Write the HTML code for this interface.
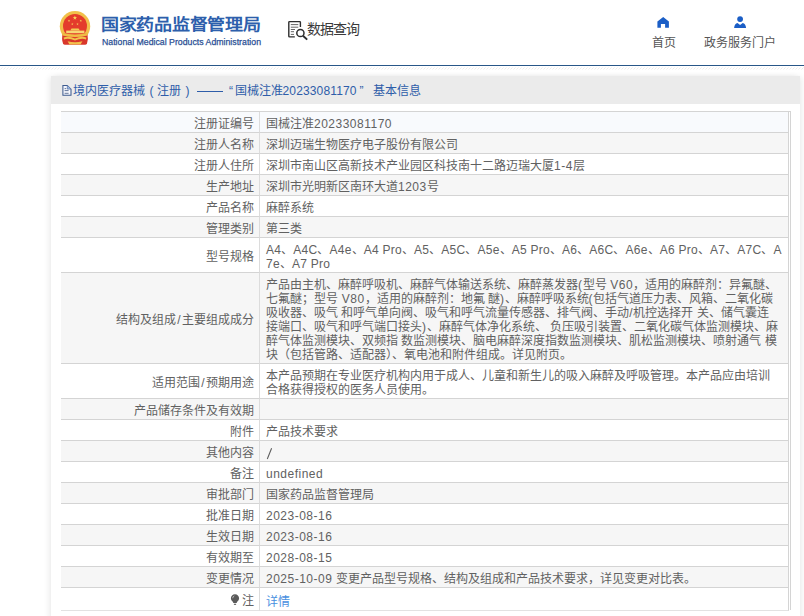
<!DOCTYPE html>
<html lang="zh-CN">
<head>
<meta charset="utf-8">
<style>
*{margin:0;padding:0;box-sizing:border-box}
html,body{width:804px;height:616px;overflow:hidden;background:#fff;font-family:"Liberation Sans",sans-serif;}
.hdr{position:absolute;left:0;top:0;width:804px;height:65px;background:#fff}
.line{position:absolute;left:0;top:65px;width:804px;height:1px;background:#285788}
.hatch{position:absolute;left:0;top:67px;width:804px;height:3px}
.emblem{position:absolute;left:58px;top:9px;width:34px;height:37px}
.t1{position:absolute;left:101px;top:11px;font-size:18px;font-weight:900;color:#2d5fac;white-space:nowrap;letter-spacing:-0.3px;transform-origin:0 5px;transform:scaleY(0.9)}
.t2{position:absolute;left:102px;top:37px;font-size:9px;color:#2a4f94;-webkit-text-stroke:0.25px #2a4f94;white-space:nowrap;transform-origin:0 0;transform:scaleX(0.972)}
.sq{position:absolute;left:287px;top:20px;width:22px;height:21px}
.sqt{position:absolute;left:307px;top:18px;font-size:14px;color:#3a3a3a;white-space:nowrap;letter-spacing:-1px}
.nav{position:absolute;top:33px;font-size:12px;color:#555;white-space:nowrap}
.ico{position:absolute}
.panel{position:absolute;left:51px;top:76px;width:749px;height:545px;background:#fff;box-shadow:-3px 0 6px -1px rgba(0,0,0,0.08),3px 0 6px -1px rgba(0,0,0,0.08)}
.ptitle{position:absolute;left:0;top:0;width:749px;height:28px;background:#ebebeb}
.pdoc{position:absolute;left:11px;top:8px;width:10px;height:12px}
.pt{position:absolute;top:8px;font-size:12px;line-height:14px;color:#2e5da9;white-space:nowrap}
.pdash{position:absolute;left:145.6px;top:15px;width:26px;height:1px;background:#2e5da9}
table{position:absolute;left:10px;top:35px;width:728px;table-layout:fixed;border-collapse:separate;border-spacing:0;font-size:12px;color:#616161;border-top:1px solid #d4d4d4}
.rline{position:absolute;left:739px;top:35px;width:1px;height:499px;background:#d4d4d4}
.tline{position:absolute;left:10px;top:35px;width:730px;height:1px;background:#d4d4d4}
td{border-bottom:1px solid #d4d4d4;border-right:1px solid #d4d4d4;padding:4.5px 6px 1.5px 6px;line-height:14px;vertical-align:middle;white-space:nowrap}
td.l{text-align:right;padding-right:5px;border-right:1px solid #dcdcdc}
tr:nth-child(odd) td{background:#fff}
tr:nth-child(even) td{background:#f6f6f6}
tr:nth-child(1) td{background:#f8fafd}
.e{letter-spacing:0.5px}
.sl{margin:0 1.5px}
.e2{letter-spacing:0.28px}
a{color:#4a90e0;text-decoration:none}
</style>
</head>
<body>
<div class="hdr">
  <svg class="ico" style="left:0;top:0" width="804" height="65" viewBox="0 0 804 65">
    <!-- emblem -->
    <circle cx="75" cy="26.3" r="15.2" fill="#f1c04a"/>
    <path d="M62.6 33.5 Q61.4 39.5 63 43.6 Q63.6 44.8 65 44.8 L85 44.8 Q86.4 44.8 87 43.6 Q88.6 39.5 87.4 33.5 Z" fill="#d9372b"/>
    <circle cx="75" cy="26" r="12" fill="#e43c2c"/>
    <g fill="#f7d45c"><polygon points="74.90,15.50 75.42,17.09 77.09,17.09 75.74,18.07 76.25,19.66 74.90,18.68 73.55,19.66 74.06,18.07 72.71,17.09 74.38,17.09"/><polygon points="69.00,19.40 69.29,20.30 70.24,20.30 69.47,20.85 69.76,21.75 69.00,21.20 68.24,21.75 68.53,20.85 67.76,20.30 68.71,20.30"/><polygon points="80.80,19.40 81.09,20.30 82.04,20.30 81.27,20.85 81.56,21.75 80.80,21.20 80.04,21.75 80.33,20.85 79.56,20.30 80.51,20.30"/><polygon points="72.30,22.80 72.59,23.70 73.54,23.70 72.77,24.25 73.06,25.15 72.30,24.60 71.54,25.15 71.83,24.25 71.06,23.70 72.01,23.70"/><polygon points="77.50,22.80 77.79,23.70 78.74,23.70 77.97,24.25 78.26,25.15 77.50,24.60 76.74,25.15 77.03,24.25 76.26,23.70 77.21,23.70"/></g>
    <path d="M70.3 30.6 L71.5 28.6 H78.6 L79.8 30.6 Z" fill="#f3cb55"/>
    <rect x="66.2" y="30.6" width="18.2" height="2.6" fill="#f6d775"/>
    <path d="M61.8 32.8 Q75 36.2 88.2 32.8 L87.6 35.6 Q75 38.6 62.4 35.6 Z" fill="#efbd45"/>
    <path d="M63.6 37.4 Q69 35.6 75 38.4 Q81 35.6 86.4 37.4 L86 39.4 Q81 37.8 75 40.6 Q69 37.8 64 39.4 Z" fill="#f2c24c"/>
    <path d="M67.6 41.2 L69.4 44.6 H80.6 L82.4 41.2 Q75 43.4 67.6 41.2 Z" fill="#f2c24c"/>
    <!-- query icon -->
    <g fill="none" stroke="#2e2e2e" stroke-width="1.4">
      <path d="M294.8 36.9 L289.5 36.9 Q288.8 36.9 288.8 36.2 L288.8 22.3 Q288.8 21.6 289.5 21.6 L299.7 21.6 Q300.4 21.6 300.4 22.3 L300.4 27"/>
      <circle cx="300.4" cy="33" r="3.6" stroke-width="1.5"/>
      <path d="M303 35.7 L307.2 39.6" stroke-width="1.9"/>
    </g>
    <g stroke="#555" stroke-width="0.9">
      <path d="M290.8 24.6 H298.3 M290.8 27.2 H298.3 M290.8 29.5 H295 M290.8 31.7 H294 M290.8 34.4 H294"/>
    </g>
    <!-- house -->
    <path d="M657.4 21.4 L663.2 16.9 L668.9 21.4 L668.9 27.8 L665.1 27.8 L665.1 23.9 L660.9 23.9 L660.9 27.8 L657.4 27.8 Z" fill="#1b5ec6"/>
    <!-- person -->
    <circle cx="740.1" cy="19.1" r="2.9" fill="#1b5ec6"/>
    <path d="M734.1 27.9 C734.4 25.2 735.6 23.5 737.5 23 L740.1 24.9 L742.7 23 C744.6 23.5 745.8 25.2 746.1 27.9 Z" fill="#1b5ec6"/>
  </svg>
  <div class="t1">国家药品监督管理局</div>
  <div class="t2">National Medical Products Administration</div>
  <div class="sqt">数据查询</div>
  <div class="nav" style="left:652px">首页</div>
  <div class="nav" style="left:704px">政务服务门户</div>
</div>
<div class="line"></div>
<svg class="hatch" width="804" height="3"><defs><pattern id="hp" width="3" height="3" patternUnits="userSpaceOnUse"><path d="M0.5 2.5 L2.5 0.5" stroke="#e9e9e9" stroke-width="0.85"/></pattern></defs><rect width="804" height="3" fill="url(#hp)"/></svg>
<div class="panel">
  <div class="ptitle"><svg class="pdoc" viewBox="0 0 10 12" width="10" height="12"><path d="M0.9 1.4 H5.2 L9 5.2 V11.3 H0.9 Z" fill="#f4f6fc" stroke="#3e5b8f" stroke-width="1.05"/><path d="M5.3 1.6 V5.1 H8.8" fill="#9db8e2" stroke="#4f6ea3" stroke-width="0.7"/><path d="M2.6 4.6 H4.2 M2.6 6.6 H6.6 M2.6 9.3 H6.6" stroke="#56698f" stroke-width="0.9"/></svg><div class="pt" style="left:22px">境内医疗器械</div><div class="pt" style="left:98.5px;font-family:'Liberation Sans'">(</div><div class="pt" style="left:106px">注册</div><div class="pt" style="left:134.5px;font-family:'Liberation Sans'">)</div><div class="pdash"></div><div class="pt" style="left:178px;font-family:'Liberation Sans'">&#8220;</div><div class="pt" style="left:184px">国械注准</div><div class="pt" style="left:231.5px;letter-spacing:0.15px">20233081170</div><div class="pt" style="left:308.5px;font-family:'Liberation Sans'">&#8221;</div><div class="pt" style="left:321.5px">基本信息</div></div>
  <div class="rline"></div><div class="tline"></div><table><colgroup><col style="width:199px"><col style="width:529px"></colgroup>
    <tr><td class="l">注册证编号</td><td>国械注准<span class="e">20233081170</span></td></tr>
    <tr><td class="l">注册人名称</td><td>深圳迈瑞生物医疗电子股份有限公司</td></tr>
    <tr><td class="l">注册人住所</td><td>深圳市南山区高新技术产业园区科技南十二路迈瑞大厦<span class="e">1-4</span>层</td></tr>
    <tr><td class="l">生产地址</td><td>深圳市光明新区南环大道<span class="e">1203</span>号</td></tr>
    <tr><td class="l">产品名称</td><td>麻醉系统</td></tr>
    <tr><td class="l">管理类别</td><td>第三类</td></tr>
    <tr><td class="l">型号规格</td><td><span class="e2">A4</span>、<span class="e2">A4C</span>、<span class="e2">A4e</span>、<span class="e2">A4 Pro</span>、<span class="e2">A5</span>、<span class="e2">A5C</span>、<span class="e2">A5e</span>、<span class="e2">A5 Pro</span>、<span class="e2">A6</span>、<span class="e2">A6C</span>、<span class="e2">A6e</span>、<span class="e2">A6 Pro</span>、<span class="e2">A7</span>、<span class="e2">A7C</span>、<span class="e2">A</span><br><span class="e2">7e</span>、<span class="e2">A7 Pro</span></td></tr>
    <tr><td class="l">结构及组成<span class="sl">/</span>主要组成成分</td><td>产品由主机、麻醉呼吸机、麻醉气体输送系统、麻醉蒸发器<span class="e">(</span>型号<span class="e"> V60</span>，适用的麻醉剂：异氟醚、<br>七氟醚；型号<span class="e"> V80</span>，适用的麻醉剂：地氟 醚<span class="e">)</span>、麻醉呼吸系统<span class="e">(</span>包括气道压力表、风箱、二氧化碳<br>吸收器、吸气 和呼气单向阀、吸气和呼气流量传感器、排气阀、手动<span class="e">/</span>机控选择开 关、储气囊连<br>接端口、吸气和呼气端口接头<span class="e">)</span>、麻醉气体净化系统、 负压吸引装置、二氧化碳气体监测模块、麻<br>醉气体监测模块、双频指 数监测模块、脑电麻醉深度指数监测模块、肌松监测模块、喷射通气 模<br>块（包括管路、适配器）、氧电池和附件组成。详见附页。</td></tr>
    <tr><td class="l">适用范围<span class="sl">/</span>预期用途</td><td>本产品预期在专业医疗机构内用于成人、儿童和新生儿的吸入麻醉及呼吸管理。本产品应由培训<br>合格获得授权的医务人员使用。</td></tr>
    <tr><td class="l">产品储存条件及有效期</td><td></td></tr>
    <tr><td class="l">附件</td><td>产品技术要求</td></tr>
    <tr><td class="l">其他内容</td><td><svg width="7" height="14" style="vertical-align:top;display:inline-block"><path d="M1.3 13 L5.6 2.2" stroke="#5a5a5a" stroke-width="1.05"/></svg></td></tr>
    <tr><td class="l">备注</td><td><span class="e">undefined</span></td></tr>
    <tr><td class="l">审批部门</td><td>国家药品监督管理局</td></tr>
    <tr><td class="l">批准日期</td><td><span class="e">2023-08-16</span></td></tr>
    <tr><td class="l">生效日期</td><td><span class="e">2023-08-16</span></td></tr>
    <tr><td class="l">有效期至</td><td><span class="e">2028-08-15</span></td></tr>
    <tr><td class="l">变更情况</td><td><span class="e">2025-10-09 </span>变更产品型号规格、结构及组成和产品技术要求，详见变更对比表。</td></tr>
    <tr><td class="l" style="padding-top:5.5px;padding-bottom:0.5px;border-bottom-color:#e2e2e2"><svg width="10" height="16" viewBox="0 0 10 16" style="vertical-align:middle;margin-right:2px;position:relative;top:-1px"><path d="M5 1.3 C2.7 1.3 0.9 3 0.9 5.3 C0.9 6.9 1.8 7.8 2.8 8.8 L3.4 10 H6.6 L7.2 8.8 C8.2 7.8 9.1 6.9 9.1 5.3 C9.1 3 7.3 1.3 5 1.3Z" fill="#5a5a5a"/><path d="M3.9 11.3 H6.1" stroke="#5a5a5a" stroke-width="1.1"/><path d="M2.7 5.2 Q2.8 3.5 4.3 2.9" stroke="#d0d0d0" stroke-width="0.8" fill="none"/></svg>注</td><td style="padding-top:5.5px;padding-bottom:0.5px;border-bottom-color:#e2e2e2"><a>详情</a></td></tr>
  </table>
</div>
</body>
</html>
